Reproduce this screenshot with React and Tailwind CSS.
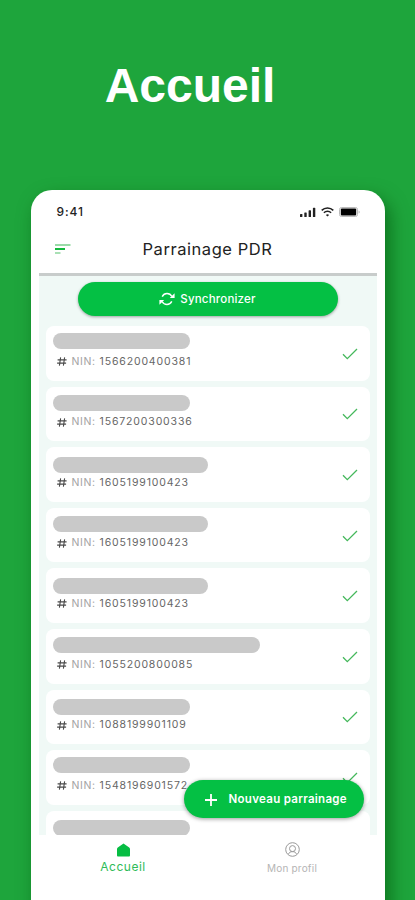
// Store listing panel for the sponsorship app: big title on green, phone screen below.

const rows = [
  { nin: '1566200400381', bar: 'mt-[7px] w-[137px]' },
  { nin: '1567200300336', bar: 'mt-[8px] w-[137px]' },
  { nin: '1605199100423', bar: 'mt-[10px] w-[155px]' },
  { nin: '1605199100423', bar: 'mt-[8px] w-[155px]' },
  { nin: '1605199100423', bar: 'mt-[10px] w-[155px]' },
  { nin: '1055200800085', bar: 'mt-[8px] w-[207px]' },
  { nin: '1088199901109', bar: 'mt-[9px] w-[137px]' },
  { nin: '1548196901572', bar: 'mt-[7px] w-[137px]' },
  { nin: '', bar: 'mt-[9px] w-[137px]' },
]

function StatusBar() {
  return (
    <div className="flex h-[43px] items-center justify-between pl-[26px] pr-[25px]">
      <span className="text-[12px] font-medium tracking-[0.9px] text-[#222]">9:41</span>
      <div className="flex items-center gap-[5px]">
        <svg width="16" height="10" viewBox="0 0 16 10" fill="#222">
          <rect x="0" y="7" width="2.4" height="3" rx=".6" />
          <rect x="4.3" y="5.4" width="2.4" height="4.6" rx=".6" />
          <rect x="8.6" y="3.3" width="2.4" height="6.7" rx=".6" />
          <rect x="12.9" y="0.8" width="2.4" height="9.2" rx=".6" />
        </svg>
        <svg width="13" height="10" viewBox="0 0 13 10" fill="none" stroke="#222" strokeWidth="1.6">
          <path d="M.7 3.4a8.3 8.3 0 0 1 11.6 0" />
          <path d="M2.9 5.8a5.1 5.1 0 0 1 7.2 0" />
          <path d="M6.5 9.6 4.9 7.9a2.3 2.3 0 0 1 3.2 0z" fill="#222" stroke="none" />
        </svg>
        <svg width="21" height="10" viewBox="0 0 21 10">
          <rect x=".5" y=".5" width="18" height="9" rx="2" fill="none" stroke="#bbb" />
          <rect x="1.8" y="1.6" width="15.4" height="6.8" rx="1" fill="#000" />
          <path d="M19.6 3.4v3.2c.8-.3 1.1-.9 1.1-1.6s-.3-1.3-1.1-1.6z" fill="#bbb" />
        </svg>
      </div>
    </div>
  )
}

function Check() {
  return (
    <svg className="mt-[1px]" width="16" height="12" viewBox="0 0 16 12" fill="none" stroke="#45b85c" strokeWidth="1.3">
      <path d="M1 6.2 5.3 10.6 15 1" />
    </svg>
  )
}

function Row({ nin, bar }) {
  return (
    <li className="flex h-[54.6px] shrink-0 items-center justify-between rounded-[8px] bg-white pl-[7px] pr-[12px]">
      <div className="h-full">
        <div className="flex h-[27px]">
          <div className={`h-[16px] rounded-full bg-[#c9c9c9] ${bar}`} />
        </div>
        {nin && (
          <div className="flex h-[17px] items-center pl-[4px]">
            <svg width="10" height="9" viewBox="0 0 10 9" fill="none" stroke="#4a4a4a" strokeWidth="1.1">
              <path d="M3.6.3 2.4 8.7M7.6.3 6.4 8.7M.6 2.9h9M.1 6.1h9" />
            </svg>
            <span className="ml-[5px] whitespace-nowrap text-[10.5px] tracking-[0.85px] text-[#666]">
              <span className="tracking-[0.65px] text-[#a3a3a3]">NIN:</span> {nin}
            </span>
          </div>
        )}
      </div>
      {nin && <Check />}
    </li>
  )
}

function TabBar() {
  return (
    <nav className="mx-[8px] grid h-[66px] grid-cols-2">
      <a className="flex flex-col items-center pt-[8px] text-[#2fbb58]">
        <svg width="13" height="14" viewBox="0 0 13 14" fill="#06bd43">
          <path d="M6.5.4 12.2 4.6c.5.4.8.9.8 1.5v6.2c0 .9-.4 1.3-1.3 1.3H1.3C.4 13.6 0 13.2 0 12.3V6.1c0-.6.3-1.1.8-1.5z" />
        </svg>
        <span className="mt-[2px] text-[12px] leading-[15px] tracking-[0.5px]">Accueil</span>
      </a>
      <a className="flex flex-col items-center pt-[7px] text-[#b5b5b5]">
        <svg width="15" height="15" viewBox="0 0 15 15" fill="none" stroke="#999" strokeWidth="1">
          <circle cx="7.5" cy="7.5" r="6.8" />
          <circle cx="7.5" cy="6.6" r="3" />
          <path d="M3.6 12.2c.3-1.7 1.7-2.6 3.9-2.6s3.600.9 3.900 2.600" />
        </svg>
        <span className="mt-[5px] text-[10px] leading-[13px] tracking-[0.2px]">Mon profil</span>
      </a>
    </nav>
  )
}

export default function App() {
  return (
    <main className="flex h-[900px] w-[415px] flex-col items-center overflow-hidden bg-[#1ea53c] font-['Inter',sans-serif]">
      <h1 className="flex h-[190px] w-full shrink-0 items-start justify-center pr-[35px] pt-[58px] font-['Liberation_Sans',sans-serif] text-[48px] font-bold leading-[55px] text-white">
        Accueil
      </h1>

      <section className="h-[730px] w-[354px] shrink-0 rounded-t-[21px] bg-white shadow-[5px_8px_18px_rgba(0,80,10,.6)]">
        <StatusBar />
        <div className="mx-[8px] flex h-[43px] items-start border-b-[3px] border-[#c8cccb] pl-[16px] pt-[10px]">
          <svg width="16" height="12" viewBox="0 0 16 12">
            <rect y="1" width="15.5" height="2" fill="#9adba8" />
            <rect y="5" width="10" height="2" fill="#12b83c" />
            <rect y="9" width="5.500" height="2" fill="#a9e0b5" />
          </svg>
          <span className="ml-[72px] whitespace-nowrap text-[16.500px] leading-[12px] tracking-[0.550px] text-[#222]">
            Parrainage PDR
          </span>
        </div>

        <div className="relative mx-[8px] h-[559px]">
          <div className="flex h-full flex-col overflow-hidden bg-[#f0f9f6] px-[7px]">
            <button className="ml-[32px] mt-[6px] flex h-[34px] w-[260px] shrink-0 items-center justify-center gap-[5px] rounded-full bg-[#04c044] pt-px text-[11.5px] font-medium tracking-[0.2px] text-white shadow-[0_1px_3px_rgba(0,0,0,.35)]">
              <svg className="mb-[2px]" width="16" height="14" viewBox="0 0 16 14" fill="none" stroke="#fff" strokeWidth="1.4">
                <path d="M3.2 4.6C4.2 2.600 6 1.500 8 1.500c2.100 0 3.900 1.100 4.900 3" />
                <path d="M12.800 9.400c-1 2-2.800 3.100-4.800 3.100-2.100 0-3.900-1.100-4.900-3" />
                <path d="M15.600 1.300v4.800h-4.800zM.4 12.700V7.900h4.800z" fill="#fff" stroke="none" />
              </svg>
              Synchronizer
            </button>
            <ul className="mt-[10px] flex flex-col gap-[6px]">
              {rows.map((row, i) => (
                <Row key={i} {...row} />
              ))}
            </ul>
          </div>
          <button className="absolute bottom-[17px] right-[13px] flex h-[38px] w-[180px] items-center whitespace-nowrap rounded-full bg-[#04c044] pl-[21px] pt-px text-[11.5px] font-semibold tracking-[0.3px] text-white shadow-[0_1px_4px_rgba(0,0,0,.4)]">
            <svg className="mr-[12px]" width="12" height="12" viewBox="0 0 12 12" stroke="#fff" strokeWidth="1.8">
              <path d="M6 0v12M0 6h12" />
            </svg>
            Nouveau parrainage
          </button>
        </div>
        <TabBar />
      </section>
    </main>
  )
}
